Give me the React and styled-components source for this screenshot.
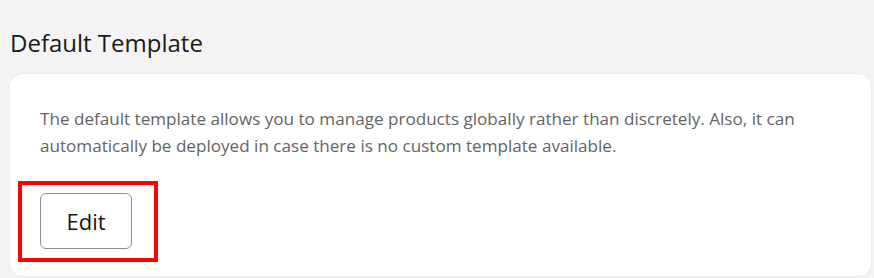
import React from "react";
import styled, { createGlobalStyle } from "styled-components";

const GlobalStyle = createGlobalStyle`
  html, body {
    margin: 0;
    padding: 0;
    background: #f4f4f4;
  }
  body {
    font-family: "Open Sans", "Noto Sans", sans-serif;
  }
`;

const Page = styled.div`
  width: 874px;
  height: 278px;
  overflow: hidden;
  box-sizing: border-box;
  padding: 27px 3px 0 10px;
`;

const Title = styled.h2`
  margin: 0 0 15px;
  font-size: 24px;
  font-weight: 400;
  line-height: 32px;
  color: #1a1a1a;
`;

const Card = styled.section`
  background: #ffffff;
  border-radius: 12px;
  box-shadow: 0 0 2px rgba(0, 0, 0, 0.12);
  padding: 31px 30px 27px 30px;
  height: 202px;
  box-sizing: border-box;
`;

const Description = styled.p`
  margin: 0;
  font-size: 17.1px;
  line-height: 27px;
  color: #646464;
`;

const Highlight = styled.div`
  position: relative;
  display: inline-block;
  margin-top: 34px;

  &::after {
    content: "";
    position: absolute;
    top: -12px;
    bottom: -13px;
    left: -22px;
    right: -26px;
    border: 4px solid #ff0000;
    pointer-events: none;
  }
`;

const Button = styled.button`
  display: block;
  width: 92px;
  height: 56px;
  border: 1px solid #8f8f8f;
  border-radius: 6px;
  background: #ffffff;
  font-family: inherit;
  font-size: 22px;
  color: #151515;
  cursor: pointer;
`;

export default function App() {
  return (
    <>
      <GlobalStyle />
      <Page>
        <Title>Default Template</Title>
        <Card>
          <Description>
            The default template allows you to manage products globally rather than discretely. Also, it can
            automatically be deployed in case there is no custom template available.
          </Description>
          <Highlight>
            <Button>Edit</Button>
          </Highlight>
        </Card>
      </Page>
    </>
  );
}
